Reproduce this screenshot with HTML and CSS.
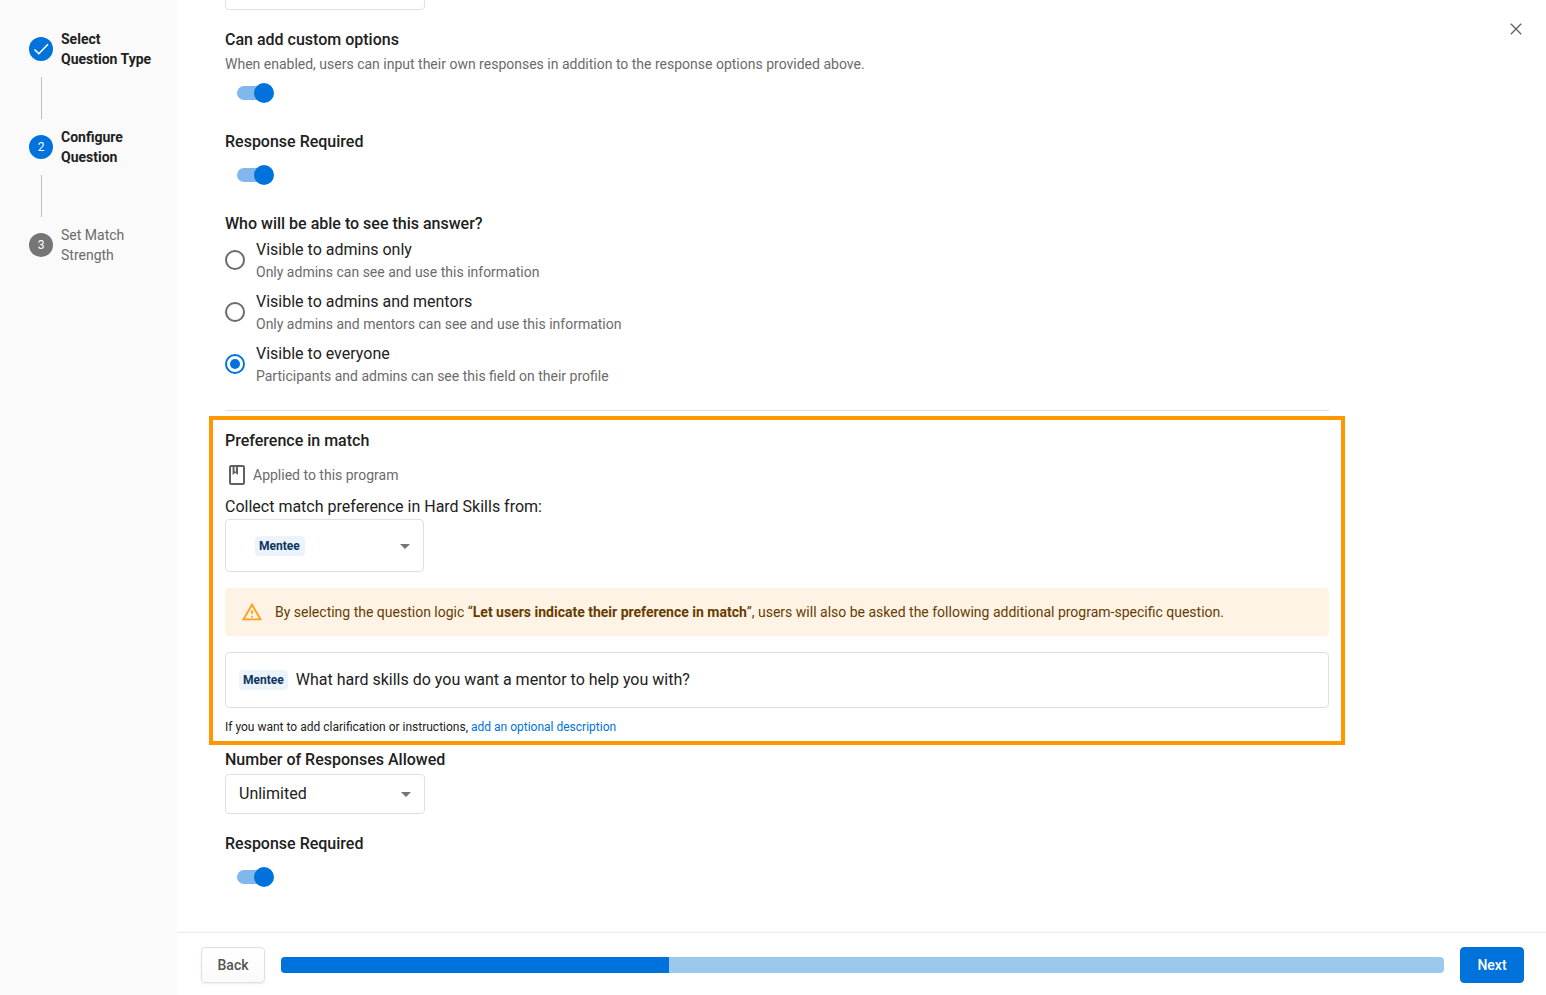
FILE: index.html
```
<!DOCTYPE html>
<html lang="en">

<head>
    <meta charset="UTF-8">
    <meta name="viewport" content="width=device-width, initial-scale=1.0">
    <title>Configure Question</title>
    <link rel="stylesheet" href="styles.css">
</head>

<body>
    <div class="wrapper">
        <!-- steps -->
        <nav class="sidebar">
            <ol class="steps">
                <li class="step step-active">
                    <span class="step-icon">
                        <svg width="24" height="24" viewBox="0 0 24 24" fill="none" stroke="currentColor" stroke-width="1.6">
                            <path d="M5.5 12.5l4.3 4.2L19 7.3" />
                        </svg>
                    </span>
                    <span class="step-label">Select<br>Question Type</span>
                </li>
                <li class="step step-active">
                    <span class="step-icon">2</span>
                    <span class="step-label">Configure<br>Question</span>
                </li>
                <li class="step">
                    <span class="step-icon">3</span>
                    <span class="step-label">Set Match<br>Strength</span>
                </li>
            </ol>
        </nav>

        <div class="main">
            <button class="close" type="button" aria-label="Close">
                <svg width="24" height="24" viewBox="0 0 24 24" fill="none" stroke="currentColor" stroke-width="1.3">
                    <path d="M6.8 6.8l10.4 10.4M17.2 6.8L6.8 17.2" />
                </svg>
            </button>

            <form class="content" id="question-form">
                <!-- scrolled mostly out of view -->
                <div class="select select-first">
                    <select aria-label="Display type">
                        <option></option>
                    </select>
                </div>

                <section class="field">
                    <label class="title" for="custom-options">Can add custom options</label>
                    <p class="hint">When enabled, users can input their own responses in addition to the response options provided above.</p>
                    <input class="switch" type="checkbox" role="switch" id="custom-options" checked>
                </section>

                <section class="field">
                    <label class="title" for="required">Response Required</label>
                    <input class="switch" type="checkbox" role="switch" id="required" checked>
                </section>

                <fieldset class="field visibility">
                    <legend class="title">Who will be able to see this answer?</legend>
                    <label class="option">
                        <input type="radio" name="visibility" value="admins">
                        <span>
                            <span class="option-name">Visible to admins only</span>
                            <span class="hint">Only admins can see and use this information</span>
                        </span>
                    </label>
                    <label class="option">
                        <input type="radio" name="visibility" value="mentors">
                        <span>
                            <span class="option-name">Visible to admins and mentors</span>
                            <span class="hint">Only admins and mentors can see and use this information</span>
                        </span>
                    </label>
                    <label class="option">
                        <input type="radio" name="visibility" value="everyone" checked>
                        <span>
                            <span class="option-name">Visible to everyone</span>
                            <span class="hint">Participants and admins can see this field on their profile</span>
                        </span>
                    </label>
                </fieldset>

                <hr class="divider">

                <!-- match preference -->
                <section class="preference">
                    <h2 class="title">Preference in match</h2>
                    <p class="applied hint">
                        <svg width="24" height="24" viewBox="0 0 24 24" fill="none" stroke="#616161" stroke-width="2">
                            <rect x="5" y="3" width="14" height="18" rx="1" />
                            <path d="M7 3h6v9l-2.6-2.2L7.6 12V3z" fill="#616161" stroke="none" />
                            <path d="M10.3 4v4.5" stroke="#fff" stroke-width="1.4" />
                        </svg>
                        Applied to this program
                    </p>
                    <label class="option-name" for="collect-from">Collect match preference in Hard Skills from:</label>
                    <div class="select select-role">
                        <select id="collect-from">
                            <option>Mentee</option>
                            <option>Mentor</option>
                        </select>
                        <svg class="caret" width="24" height="24" viewBox="0 0 24 24">
                            <path d="M7 10l5 5 5-5z" />
                        </svg>
                    </div>

                    <div class="warning">
                        <svg width="22" height="22" viewBox="0 0 24 24" fill="#ff9f1a">
                            <path d="M12 5.99L19.53 19H4.47L12 5.99M12 2L1 21h22L12 2zm1 14h-2v2h2v-2zm0-6h-2v4h2v-4z" />
                        </svg>
                        <p>By selecting the question logic “<b>Let users indicate their preference in match</b>”, users will also be asked the following additional program-specific question.</p>
                    </div>

                    <div class="question">
                        <label class="chip" for="question-text">Mentee</label>
                        <input type="text" id="question-text" value="What hard skills do you want a mentor to help you with?">
                    </div>
                    <p class="note">If you want to add clarification or instructions, <a href="#">add an optional description</a></p>
                </section>

                <section class="field">
                    <label class="title" for="responses">Number of Responses Allowed</label>
                    <div class="select">
                        <select id="responses">
                            <option>Unlimited</option>
                            <option>1</option>
                            <option>2</option>
                        </select>
                        <svg class="caret" width="24" height="24" viewBox="0 0 24 24">
                            <path d="M7 10l5 5 5-5z" />
                        </svg>
                    </div>
                </section>

                <section class="field">
                    <label class="title" for="preference-required">Response Required</label>
                    <input class="switch" type="checkbox" role="switch" id="preference-required" checked>
                </section>
            </form>

            <footer class="footer">
                <button class="btn" type="button">Back</button>
                <div class="progress" role="progressbar" aria-label="Progress" aria-valuenow="1" aria-valuemin="0" aria-valuemax="3">
                    <div class="progress-bar" style="width: 33.33%"></div>
                </div>
                <button class="btn btn-primary" type="submit" form="question-form">Next</button>
            </footer>
        </div>
    </div>
</body>

</html>
```
FILE: styles.css
```
* {
    margin: 0;
    padding: 0;
    box-sizing: border-box;
}

body {
    font-family: Roboto, "Liberation Sans", sans-serif;
    font-size: 16px;
    line-height: 24px;
    color: #212121;
    background-color: #fff;
}

input,
select,
button {
    font: inherit;
    color: inherit;
}

svg {
    display: block;
    flex: none;
}

.wrapper {
    display: flex;
    height: 100vh;
    overflow: hidden;
}

/* sidebar */
.sidebar {
    flex: none;
    width: 177px;
    padding: 29px 16px 29px 29px;
    background-color: #fafafa;
}

.steps {
    list-style: none;
}

.step {
    display: grid;
    grid-template-columns: 24px 1fr;
    column-gap: 8px;
    align-items: center;
    font-size: 14px;
    line-height: 20px;
    color: #6b6b6b;
}

.step:not(:last-child)::after {
    content: "";
    width: 1px;
    height: 42px;
    margin: 8px 0 8px 12px;
    background-color: #bdbdbd;
}

.step-icon {
    display: flex;
    align-items: center;
    justify-content: center;
    width: 24px;
    height: 24px;
    border-radius: 50%;
    font-size: 12px;
    color: #fff;
    background-color: #757575;
}

.step-active {
    font-weight: 700;
    color: #212121;
}

.step-active .step-icon {
    font-weight: 400;
    background-color: #0072db;
}

/* main */
.main {
    position: relative;
    display: flex;
    flex: 1;
    flex-direction: column;
    min-width: 0;
}

.close {
    position: absolute;
    top: 17px;
    right: 18px;
    border: 0;
    color: #616161;
    background: none;
    cursor: pointer;
}

.content {
    flex: 1;
    width: 100%;
    max-width: 1200px;
    min-height: 0;
    padding: 0 48px;
    overflow: hidden;
}

.field {
    display: flex;
    flex-direction: column;
    align-items: flex-start;
    margin-bottom: 18px;
    border: 0;
}

.title {
    display: block;
    margin-bottom: 2px;
    font-size: 16px;
    font-weight: 500;
}

.hint {
    display: block;
    font-size: 14px;
    line-height: 20px;
    color: #6b6b6b;
}

/* switch */
.switch {
    display: flex;
    align-items: center;
    width: 34px;
    height: 14px;
    margin: 12px;
    border-radius: 7px;
    appearance: none;
    background-color: #bdbdbd;
    cursor: pointer;
}

.switch::before {
    content: "";
    flex: none;
    width: 20px;
    height: 20px;
    margin-left: -3px;
    border-radius: 50%;
    background-color: #fafafa;
}

.switch:checked {
    background-color: #80b8ed;
}

.switch:checked::before {
    margin-left: 17px;
    background-color: #0072db;
}

/* radios */
.visibility {
    gap: 8px;
    margin-bottom: 24px;
}

.option {
    display: flex;
    align-items: center;
    gap: 11px;
    cursor: pointer;
}

.option-name {
    display: block;
}

.option input {
    flex: none;
    width: 20px;
    height: 20px;
    border: 2px solid #6b6b6b;
    border-radius: 50%;
    appearance: none;
}

.option input:checked {
    padding: 3px;
    border-color: #0072db;
    background-color: #0072db;
    background-clip: content-box;
}

.divider {
    border: 0;
    border-top: 1px solid #e0e0e0;
}

/* select */
.select {
    display: grid;
    align-items: center;
    width: 200px;
    height: 40px;
}

.select select {
    grid-area: 1 / 1;
    width: 100%;
    height: 100%;
    padding: 0 32px 0 13px;
    border: 1px solid #e0e0e0;
    border-radius: 4px;
    appearance: none;
    background-color: transparent;
}

.select .caret {
    grid-area: 1 / 1;
    justify-self: end;
    margin-right: 7px;
    fill: #757575;
    pointer-events: none;
}

.select-first {
    margin-top: -30px;
    margin-bottom: 18px;
}

.select-role {
    width: 199px;
    height: 53px;
    margin-bottom: 16px;
}

/* chip behind the selected role */
.select-role::before {
    content: "";
    grid-area: 1 / 1;
    width: 50px;
    height: 20px;
    margin-left: 30px;
    border-radius: 4px;
    background-color: #ecf4fb;
}

.select-role select {
    padding-left: 33px;
    font-size: 12px;
    font-weight: 700;
    color: #0d3561;
}

.chip {
    flex: none;
    padding: 0 4px;
    border-radius: 4px;
    font-size: 12px;
    font-weight: 700;
    line-height: 20px;
    color: #0d3561;
    background-color: #ecf4fb;
}

/* highlighted block */
.preference {
    margin: 5px -16px 3px;
    padding: 9px 12px 5px;
    border: 4px solid #ff9800;
}

.preference .title {
    margin-bottom: 10px;
}

.applied {
    display: flex;
    align-items: center;
    gap: 4px;
    margin-bottom: 8px;
}

.warning {
    display: flex;
    align-items: center;
    gap: 12px;
    min-height: 48px;
    margin-bottom: 16px;
    padding: 0 16px;
    border-radius: 4px;
    font-size: 14px;
    line-height: 20px;
    color: #663c00;
    background-color: #fff3e6;
}

.question {
    display: flex;
    align-items: center;
    gap: 8px;
    height: 56px;
    margin-bottom: 10px;
    padding: 0 13px;
    border: 1px solid #e0e0e0;
    border-radius: 4px;
}

.question input {
    flex: 1;
    min-width: 0;
    border: 0;
    outline: 0;
    background: none;
}

.note {
    font-size: 12px;
    line-height: 18px;
}

.note a {
    color: #0072db;
    text-decoration: none;
}

/* footer */
.footer {
    display: flex;
    flex: none;
    align-items: center;
    gap: 16px;
    height: 63px;
    padding: 2px 22px 0 24px;
    border-top: 1px solid #ebebeb;
}

.btn {
    min-width: 64px;
    height: 36px;
    border: 1px solid #dde1e5;
    border-radius: 4px;
    font-size: 14px;
    font-weight: 500;
    color: #555;
    background: linear-gradient(#fff, #fafafa);
    box-shadow: 0 1px 2px rgba(0, 0, 0, .08);
    cursor: pointer;
}

.btn-primary {
    border-color: #0072db;
    color: #fff;
    background: #0072db;
    box-shadow: none;
}

.progress {
    flex: 1;
    height: 16px;
    border-radius: 4px;
    overflow: hidden;
    background-color: #9cc8ee;
}

.progress-bar {
    height: 100%;
    background-color: #0072db;
}
```
